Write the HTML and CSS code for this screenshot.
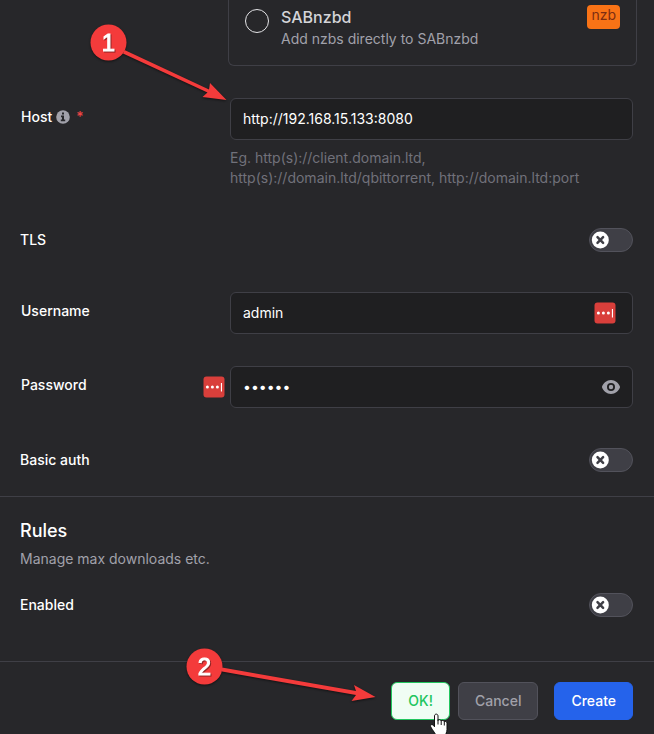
FILE: index.html
```html
<!DOCTYPE html>
<html lang="en">
<head>
<meta charset="utf-8">
<title>Download client</title>
<link rel="stylesheet" href="styles.css">
</head>
<body>
<form class="panel">
  <label class="client-card">
    <input class="client-radio" type="radio" name="client">
    <span class="client-text">
      <span class="client-name">SABnzbd</span>
      <span class="client-desc">Add nzbs directly to SABnzbd</span>
    </span>
    <span class="tag">nzb</span>
  </label>

  <div class="field host">
    <label class="label" for="host">Host
      <svg class="info" viewBox="0 0 14 14" aria-hidden="true"><circle cx="7" cy="7" r="6.8" fill="#a1a1aa"/><path d="M5 5.600h3v4H9.200v1.600H4.800V9.600H6V7.200H5zM6 2.600h2v2H6z" fill="#27272a"/></svg>
      <span class="required">*</span>
    </label>
    <div class="control">
      <input class="text" id="host" type="text" value="http://192.168.15.133:8080">
      <p class="help">Eg. http(s)://client.domain.ltd, http(s)://domain.ltd/qbittorrent, http://domain.ltd:port</p>
    </div>
  </div>

  <div class="switch-row">
    <label for="tls">TLS</label>
    <span class="switch"><input id="tls" type="checkbox" role="switch"><svg viewBox="0 0 18 18" aria-hidden="true"><circle cx="9.300" cy="9" r="8.500" fill="#fff"/><path d="M6.500 6.200l5.600 5.600M12.100 6.200l-5.600 5.600" stroke="#3f3f46" stroke-width="2.500" stroke-linecap="round"/></svg></span>
  </div>

  <div class="field username">
    <label class="label" for="username">Username</label>
    <div class="control">
      <input class="text" id="username" type="text" value="admin">
      <svg class="manager manager-inside" viewBox="0 0 22 22" aria-hidden="true"><rect x=".5" y=".5" width="21" height="21" rx="3" fill="#d93f3b"/><g fill="#fff"><circle cx="4.400" cy="11" r="1.500"/><circle cx="9.400" cy="11" r="1.500"/><circle cx="14.400" cy="11" r="1.500"/><path d="M17.900 7h1.100v8.500h-1.100z"/></g></svg>
    </div>
  </div>

  <div class="field password">
    <label class="label" for="password">Password</label>
    <div class="control">
      <input class="text" id="password" type="password" value="secret">
      <svg class="manager manager-outside" viewBox="0 0 22 22" aria-hidden="true"><rect x=".5" y=".5" width="21" height="21" rx="3" fill="#d93f3b"/><g fill="#fff"><circle cx="4.400" cy="11" r="1.500"/><circle cx="9.400" cy="11" r="1.500"/><circle cx="14.400" cy="11" r="1.500"/><path d="M17.900 7h1.100v8.500h-1.100z"/></g></svg>
      <button class="reveal" type="button" aria-label="Show password"><svg viewBox="0 0 20 20" aria-hidden="true"><g fill="#a1a1aa"><circle cx="10" cy="10" r="2.200"/><path fill-rule="evenodd" d="M.9 10C2.200 6 5.800 3 10 3s7.800 3 9.100 7c-1.300 4-4.900 7-9.100 7S2.200 14 .9 10zM14 10a4 4 0 11-8 0 4 4 0 018 0z"/></g></svg></button>
    </div>
  </div>

  <div class="switch-row">
    <label for="basic">Basic auth</label>
    <span class="switch"><input id="basic" type="checkbox" role="switch"><svg viewBox="0 0 18 18" aria-hidden="true"><circle cx="9.300" cy="9" r="8.500" fill="#fff"/><path d="M6.500 6.200l5.600 5.600M12.100 6.200l-5.600 5.600" stroke="#3f3f46" stroke-width="2.500" stroke-linecap="round"/></svg></span>
  </div>

  <section class="rules">
    <h2>Rules</h2>
    <p>Manage max downloads etc.</p>
    <div class="switch-row enabled">
      <label for="enabled">Enabled</label>
      <span class="switch"><input id="enabled" type="checkbox" role="switch"><svg viewBox="0 0 18 18" aria-hidden="true"><circle cx="9.300" cy="9" r="8.500" fill="#fff"/><path d="M6.500 6.200l5.600 5.600M12.100 6.200l-5.600 5.600" stroke="#3f3f46" stroke-width="2.500" stroke-linecap="round"/></svg></span>
    </div>
  </section>

  <footer class="actions">
    <button class="btn ok" type="button">OK!</button>
    <button class="btn cancel" type="button">Cancel</button>
    <button class="btn create" type="submit">Create</button>
  </footer>
</form>

<svg class="notes" width="654" height="734" viewBox="0 0 654 734">
  <g class="callout">
    <path d="M124.500 50L209 89.500 210 83 226.500 100 202.500 97 207.500 92.500 123 53.500z"/>
    <circle cx="108.500" cy="42.500" r="18"/>
    <text x="108.500" y="51">1</text>
  </g>
  <g class="callout">
    <path d="M222 667.500L356 691 354 685 375.500 697 351.500 701 356 695 222 671.500z"/>
    <circle cx="204.500" cy="666.500" r="18"/>
    <text x="204.500" y="675">2</text>
  </g>
  <path class="cursor" d="M434.500 716c0-2.500 3.500-2.500 3.500 0v4.500c.500-1.300 3-1 3.200.4.600-1 3-.7 3.100.8.800-.8 2.700-.2 2.700 1.400v6.400c0 3-1.500 4-1.500 7h-9.500c0-3-3.200-5.500-5.200-9.500-1-2 .9-3.200 2.500-1.700l1.200 1.500z"/>
  <path class="cursor-lines" d="M438 719.500v5M441.200 720.500v4.500M444.300 721.500v4"/>
</svg>
</body>
</html>
```

FILE: styles.css
```css
* {
  box-sizing: border-box;
}

body {
  margin: 0;
  background: #27272a;
  color: #fff;
  font: 14px/20px Inter, "Liberation Sans", sans-serif;
}

p,
h2 {
  margin: 0;
}

button,
input {
  font: inherit;
}

.client-card {
  display: flex;
  align-items: flex-start;
  height: 66px;
  margin: 0 17px 0 228px;
  padding: 5px 16px 0;
  border: 1px solid #3f3f46;
  border-top: 0;
  border-radius: 0 0 6px 6px;
}

.client-radio {
  appearance: none;
  flex: none;
  width: 24px;
  height: 24px;
  margin: 4px 12px 0 0;
  border: 1px solid #e4e4e7;
  border-radius: 50%;
}

.client-text {
  flex: 1;
  display: flex;
  flex-direction: column;
}

.client-name {
  color: #d4d4d8;
  font-size: 16px;
  font-weight: 500;
  line-height: 24px;
}

.client-desc {
  color: #a1a1aa;
}

.tag {
  height: 24px;
  padding: 0 4px;
  border-radius: 4px;
  background: #f97316;
  color: #7c2d12;
}

.field {
  display: grid;
  grid-template-columns: 210px 1fr;
  padding: 0 21px 0 20px;
}

.host {
  margin-top: 32px;
}

.username {
  margin-top: 40px;
}

.password {
  margin-top: 32px;
}

.label {
  display: flex;
  align-items: center;
  height: 20px;
  margin-top: 9px;
  padding-left: 1px;
  font-weight: 500;
}

.info {
  width: 14px;
  height: 14px;
  margin: 0 6px 0 4px;
}

.required {
  color: #ef4444;
}

.control {
  position: relative;
}

.text {
  display: block;
  width: 100%;
  height: 42px;
  padding: 0 12px 2px;
  border: 1px solid #3f3f46;
  border-radius: 6px;
  outline: 0;
  background: #1f1f21;
  color: #fff;
}

.help {
  margin-top: 8px;
  color: #71717a;
}

.manager {
  position: absolute;
  top: 10px;
  width: 22px;
  height: 22px;
}

.manager-inside {
  right: 17px;
}

.manager-outside {
  left: -27px;
}

.reveal {
  position: absolute;
  top: 11px;
  right: 12px;
  width: 20px;
  height: 20px;
  padding: 0;
  border: 0;
  background: none;
}

.reveal svg {
  display: block;
}

.switch-row {
  display: flex;
  align-items: center;
  justify-content: space-between;
  margin-top: 40px;
  padding: 0 21px 0 20px;
  font-weight: 500;
}

.switch {
  position: relative;
  width: 44px;
  height: 24px;
}

.switch input {
  appearance: none;
  display: block;
  width: 44px;
  height: 24px;
  margin: 0;
  border: 1px solid #52525b;
  border-radius: 12px;
  background: #3f3f46;
}

.switch svg {
  position: absolute;
  top: 3px;
  left: 2px;
  width: 18px;
  height: 18px;
  pointer-events: none;
}

.rules {
  margin-top: 24px;
  padding: 20px 0 44px;
  border-top: 1px solid #3f3f46;
}

.rules h2,
.rules p {
  padding: 0 20px;
}

.rules h2 {
  font-size: 18px;
  font-weight: 500;
  line-height: 28px;
}

.rules p {
  margin-top: 4px;
  color: #a1a1aa;
}

.enabled {
  margin-top: 24px;
}

.actions {
  display: flex;
  justify-content: flex-end;
  gap: 8px;
  padding: 20px 21px 14px;
  border-top: 1px solid #3f3f46;
}

.btn {
  height: 38px;
  padding: 0 16px;
  border: 1px solid;
  border-radius: 6px;
  font-weight: 500;
}

.ok {
  border-color: #22c55e;
  background: #f0fdf4;
  color: #22c55e;
}

.cancel {
  border-color: #52525b;
  background: #3f3f46;
  color: #a1a1aa;
}

.create {
  margin-left: 8px;
  border-color: #2563eb;
  background: #2563eb;
  color: #fff;
}

.notes {
  position: absolute;
  top: 0;
  left: 0;
  pointer-events: none;
}

.callout {
  fill: #f43b3b;
  filter: drop-shadow(0 1px 1px #0008);
}

.callout text {
  fill: #fff;
  stroke: #fff;
  stroke-width: 1px;
  font: 24px "Liberation Sans", sans-serif;
  text-anchor: middle;
  filter: drop-shadow(1px 1px 0 #0006);
}

.cursor {
  fill: #fff;
  stroke: #111;
}

.cursor-lines {
  fill: none;
  stroke: #111;
}
```
